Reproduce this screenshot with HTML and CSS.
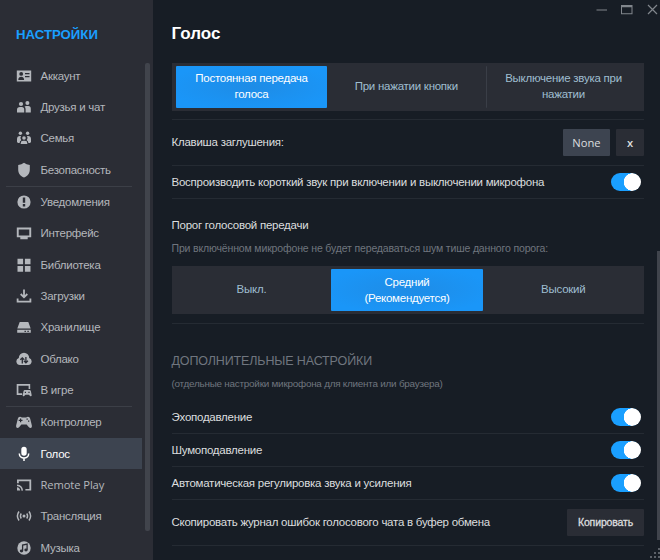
FILE: index.html
```
<!DOCTYPE html>
<html lang="ru">
<head>
<meta charset="utf-8">
<title>Настройки</title>
<link rel="stylesheet" href="styles.css">
</head>
<body>
<div class="window">
  <aside class="sidebar">
    <h2 class="sidebar-title">НАСТРОЙКИ</h2>
    <nav class="nav">
      <a class="item"><svg class="icon" viewBox="0 0 16 16"><path fill-rule="evenodd" d="M.8 2.500h14.400v11H.8zM5.200 4a1.900 1.900 0 1 0 0 3.800 1.900 1.900 0 0 0 0-3.800zM2.300 12h5.800c0-2.200-1.200-3.200-2.900-3.200S2.300 9.800 2.300 12zM9 5v1.300h4.500V5zM9 8v1.200h4.500V8z"/></svg>Аккаунт</a>
      <a class="item"><svg class="icon" viewBox="0 0 16 16"><circle cx="5" cy="5" r="2.100"/><circle cx="11.400" cy="3.900" r="2"/><path d="M1 13.500V10.800Q1 8 4 8h1.800q2.400 0 2.400 2.600v2.900zM9.600 13.500v-3.200q0-1.800-1-2.700.6-.6 1.700-.6h2q2.500 0 2.500 2.800v3.700z"/></svg>Друзья и чат</a>
      <a class="item"><svg class="icon" viewBox="0 0 16 16"><circle cx="4.400" cy="3.300" r="1.700"/><circle cx="11.600" cy="3.300" r="1.700"/><circle cx="8" cy="8" r="1.800"/><path d="M1 12V9q0-3 3-3h1q-1.500 2.500.3 4.300Q3.700 11 3.600 13H2zM15 12V9q0-3-3-3h-1q1.500 2.500-.3 4.300 1.600.7 1.700 2.700H14zM4.700 14v-.8q0-2.400 2.300-2.400h2q2.300 0 2.300 2.400v.8z"/></svg>Семья</a>
      <a class="item"><svg class="icon" viewBox="0 0 16 16"><path d="M8 .8q2.300 2 5.800 2.200v4.400c0 4.200-2.300 6.500-5.800 8-3.500-1.500-5.800-3.800-5.800-8V3Q5.700 2.800 8 .8z"/></svg>Безопасность</a>
      <hr class="nav-rule">
      <a class="item"><svg class="icon" viewBox="0 0 16 16"><path fill-rule="evenodd" d="M8 1.400a6.600 6.600 0 1 0 0 13.200A6.600 6.600 0 0 0 8 1.400zM6.800 3.500h2.400v5.300H6.800zM6.800 10h2.400v2.400H6.800z"/></svg>Уведомления</a>
      <a class="item"><svg class="icon" viewBox="0 0 16 16"><path fill-rule="evenodd" d="M.8 2.500h14.400v9.800h-3.500v2H4.300v-2H.8zM2.700 4.400v6h10.600v-6z"/></svg>Интерфейс</a>
      <a class="item"><svg class="icon" viewBox="0 0 16 16"><path d="M1.500 1.700h5.600v5.600H1.500zM8.900 1.700h5.600v5.600H8.900zM1.500 9.100h5.600v5.600H1.500zM8.900 9.100h5.600v5.600H8.900z"/></svg>Библиотека</a>
      <a class="item"><svg class="icon line" viewBox="0 0 16 16"><path d="M8 1.500v7.300M4.700 6 8 9.300 11.300 6M1.600 10.600v3h12.800v-3"/></svg>Загрузки</a>
      <a class="item"><svg class="icon" viewBox="0 0 16 16"><path fill-rule="evenodd" d="M3.700 3h8.600l2.400 6.500H1.300zM1.200 10.800h13.600v3H1.200zM8.500 11.700v1.200h1.400v-1.200zM11.400 11.700v1.200h1.400v-1.200z"/></svg>Хранилище</a>
      <a class="item"><svg class="icon" viewBox="0 0 16 16"><path d="M4 14a3.600 3.600 0 0 1-1.200-7A5.200 5.200 0 0 1 13.200 7 3.600 3.600 0 0 1 12 14z"/><path class="cut" d="M6.300 12.400V7M4.300 8.800l2-2 2 2M9.900 6v5.600M7.900 9.800l2 2 2-2"/></svg>Облако</a>
      <a class="item"><svg class="icon" viewBox="0 0 16 16"><path d="M.7 2h13.500v5h-1.600V3.700H2.400v7.600h3.800V13H.7z"/><path fill-rule="evenodd" d="M8.800 8h4.800q1 0 1.300 1.300l.8 4q0 1.300-1.300 1l-1.600-1.500H9.500l-1.600 1.500q-1.300.3-1.200-1l.8-4Q7.800 8 8.800 8zM8.800 9.700v1.200H10V9.700zM12.400 9.700v1.200h1.200V9.700z"/></svg>В игре</a>
      <hr class="nav-rule">
      <a class="item"><svg class="icon" viewBox="0 0 16 16"><path fill-rule="evenodd" d="M4 2.700q1 0 1.800.7h4.400q.8-.7 1.800-.7 1.700 0 2.200 2l1.600 6.500q.5 2.500-1.200 2.700-1 0-1.900-1l-2.100-2.400H5.400l-2.100 2.400q-.9 1-1.900 1Q-.3 13.700.2 11.200l1.600-6.500q.5-2 2.200-2zM4 4.500v1.300H2.700V7H4v1.300h1.200V7h1.300V5.800H5.200V4.500zM10.500 4.500v1.300h1.300V4.500zM12 6.500v1.300h1.300V6.500z"/></svg>Контроллер</a>
      <a class="item active"><svg class="icon" viewBox="0 0 16 16"><rect x="5.300" y=".8" width="5.400" height="9" rx="2.700"/><path class="stroke" d="M3.300 7.500c0 6 9.400 6 9.400 0M8 12v3"/></svg>Голос</a>
      <a class="item latin"><svg class="icon" viewBox="0 0 16 16"><path d="M1 2.600h14.200v11H9.400v-1.700h4V4.300H2.800v1.900H1z"/><path class="stroke" d="M1 8.300q4.800.4 5.300 5.300"/><path d="M1 10.300q2.800.3 3.200 3.300H1z"/></svg>Remote Play</a>
      <a class="item"><svg class="icon" viewBox="0 0 16 16"><circle cx="8" cy="8" r="1.500"/><path class="stroke" d="M5.300 5.500q-1.700 2.500 0 5M10.700 5.500q1.700 2.500 0 5M3 3.500Q-.2 8 3 12.500M13 3.500q3.200 4.500 0 9"/></svg>Трансляция</a>
      <a class="item"><svg class="icon" viewBox="0 0 16 16"><circle cx="8" cy="8" r="6.700"/><path class="cut" d="M6.600 10.800V5l4.500-1v5.700"/><ellipse class="hole" cx="5.500" cy="11" rx="1.700" ry="1.400"/><ellipse class="hole" cx="10" cy="10" rx="1.700" ry="1.400"/></svg>Музыка</a>
    </nav>
    <div class="sidebar-thumb"></div>
  </aside>
  <main class="main">
    <h1 class="title">Голос</h1>
    <div class="segmented">
      <button class="seg on">Постоянная передача<br>голоса</button>
      <button class="seg">При нажатии кнопки</button>
      <button class="seg divided">Выключение звука при<br>нажатии</button>
    </div>
    <section class="row row-key">
      <span>Клавиша заглушения:</span>
      <div class="keys"><button class="key">None</button><button class="key clear">x</button></div>
    </section>
    <section class="row"><span>Воспроизводить короткий звук при включении и выключении микрофона</span><i class="toggle"></i></section>
    <section class="threshold">
      <h3 class="label">Порог голосовой передачи</h3>
      <p class="hint">При включённом микрофоне не будет передаваться шум тише данного порога:</p>
      <div class="segmented">
        <button class="seg">Выкл.</button>
        <button class="seg on">Средний<br>(Рекомендуется)</button>
        <button class="seg">Высокий</button>
      </div>
    </section>
    <header class="extra">
      <h2 class="extra-title">ДОПОЛНИТЕЛЬНЫЕ НАСТРОЙКИ</h2>
      <p class="extra-hint">(отдельные настройки микрофона для клиента или браузера)</p>
    </header>
    <section class="row"><span>Эхоподавление</span><i class="toggle"></i></section>
    <section class="row"><span>Шумоподавление</span><i class="toggle"></i></section>
    <section class="row"><span>Автоматическая регулировка звука и усиления</span><i class="toggle"></i></section>
    <section class="row row-copy"><span>Скопировать журнал ошибок голосового чата в буфер обмена</span><button class="copy">Копировать</button></section>
    <svg class="controls" viewBox="0 0 66 16"><path d="M1.500 9h10.500M53 4l9 9M62 4l-9 9"/><path fill-rule="evenodd" class="max" d="M26 4h11.500v9.300H26zM27 6.300v6h9.500v-6z"/></svg>
    <div class="main-thumb"></div>
    <svg class="grip" viewBox="0 0 10 12"><path d="M8 0h2v2H8zM4 4h2v2H4zM8 4h2v2H8zM0 8h2v2H0zM4 8h2v2H4zM8 8h2v2H8z"/></svg>
  </main>
</div>
</body>
</html>
```
FILE: styles.css
```
* { box-sizing: border-box; }
body { margin: 0; background: #171d25; font-family: "Liberation Sans", Arial, sans-serif; font-size: 11.500px; letter-spacing: -.25px; color: #dcdedf; }
h1, h2, h3, p { margin: 0; font-weight: normal; }
button { border: 0; padding: 0; font: inherit; letter-spacing: inherit; color: inherit; }
.window { display: flex; width: 660px; height: 560px; overflow: hidden; }

.sidebar { position: relative; width: 152.500px; flex: none; background: #2b2d35; overflow: hidden; }
.sidebar-title { height: 60px; padding: 26px 0 0 16px; font-size: 13.200px; letter-spacing: 0; line-height: 17px; font-weight: bold; color: #1a9fff; }
.nav { display: flex; flex-direction: column; width: 141.500px; }
.item { display: flex; flex: none; align-items: center; gap: 9px; height: 31.400px; padding: 0 0 .4px 15.500px; color: #b4b7bc; white-space: nowrap; }
.item.active { background: #3d4450; color: #fff; }
.item.latin { font-family: "Open Sans", sans-serif; font-size: 11.200px; letter-spacing: -.1px; }
.nav-rule { flex: none; width: 126px; height: 1px; margin: 0 0 -.3px 6px; border: 0; background: #3c3f47; }
.icon { width: 16px; height: 16px; flex: none; fill: currentColor; }
.icon.line { fill: none; stroke: currentColor; stroke-width: 1.800; }
.stroke { fill: none; stroke: currentColor; stroke-width: 1.500; }
.cut { fill: none; stroke: #2b2d35; stroke-width: 1.300; }
.hole { fill: #2b2d35; }
.sidebar-thumb { position: absolute; left: 145px; top: 63px; width: 4.500px; height: 468px; border-radius: 2px; background: #41444c; }

.main { position: relative; flex: 1; padding: 0 16px 0 19px; }
.title { height: 62.700px; padding-top: 24px; font-size: 17px; letter-spacing: 0; line-height: 20px; font-weight: bold; color: #fff; }
.segmented { display: grid; grid-template-columns: 151px 1fr 154px; gap: 4px; height: 48.500px; padding: 3.500px 4.500px; background: #2a2d35; }
.seg { padding-top: 0; background: none; color: #9fbdd0; line-height: 15.600px; border-radius: 1px; }
.seg.on { background: radial-gradient(ellipse at center, #1e8ce6 0%, #1a96f8 80%); color: #fff; }
.seg.divided { border-left: 1px solid #3a3e47; padding-left: 1px; }
.row { display: flex; align-items: center; justify-content: space-between; height: 33.200px; border-bottom: 1px solid #252b33; white-space: nowrap; }
.row-key { height: 47px; margin-top: 7.800px; border-top: 1px solid #252b33; }
.keys { display: flex; gap: 6px; }
.key { width: 47px; height: 27px; border-radius: 1px; background: #3d4450; font-family: "Open Sans", sans-serif; font-size: 11.200px; letter-spacing: 0; }
.key.clear { width: 28px; background: #2a2d35; font-weight: 600; }
.toggle { width: 30px; height: 18px; margin-right: 3px; border-radius: 9px; background: radial-gradient(circle at 21.500px 9px, #fff 8.500px, #1a9fff 9px); }
.threshold { padding-top: 17.500px; height: 124.500px; border-bottom: 1px solid #252b33; }
.label { height: 16px; font-size: 11.500px; line-height: 16px; }
.hint { height: 33.300px; padding-top: 9.600px; font-size: 10.500px; letter-spacing: -.15px; line-height: 13px; color: #6f757e; }
.threshold .segmented { grid-template-columns: 151px 152px 1fr; }
.threshold .seg.on { padding-top: 1px; }
.extra { height: 77px; padding-top: 28.500px; color: #70767f; }
.extra-title { font-size: 12.500px; letter-spacing: -.13px; line-height: 18px; }
.extra-hint { padding-top: 7.500px; font-size: 9.900px; letter-spacing: -.23px; line-height: 12px; }
.row-copy { height: 45.500px; }
.copy { width: 77px; height: 27px; border-radius: 1px; background: #2a2d35; font-size: 10.500px; letter-spacing: -.15px; -webkit-text-stroke: .3px; }
.controls { position: absolute; left: 442.500px; top: 1px; width: 66px; height: 16px; fill: none; stroke: #81868c; stroke-width: 1.200; }
.max { fill: #81868c; stroke: none; }
.main-thumb { position: absolute; right: 0; top: 251px; width: 3px; bottom: 20px; background: #40444c; }
.grip { position: absolute; right: 0; bottom: 0; width: 10px; height: 12px; fill: #5b6067; }
```
